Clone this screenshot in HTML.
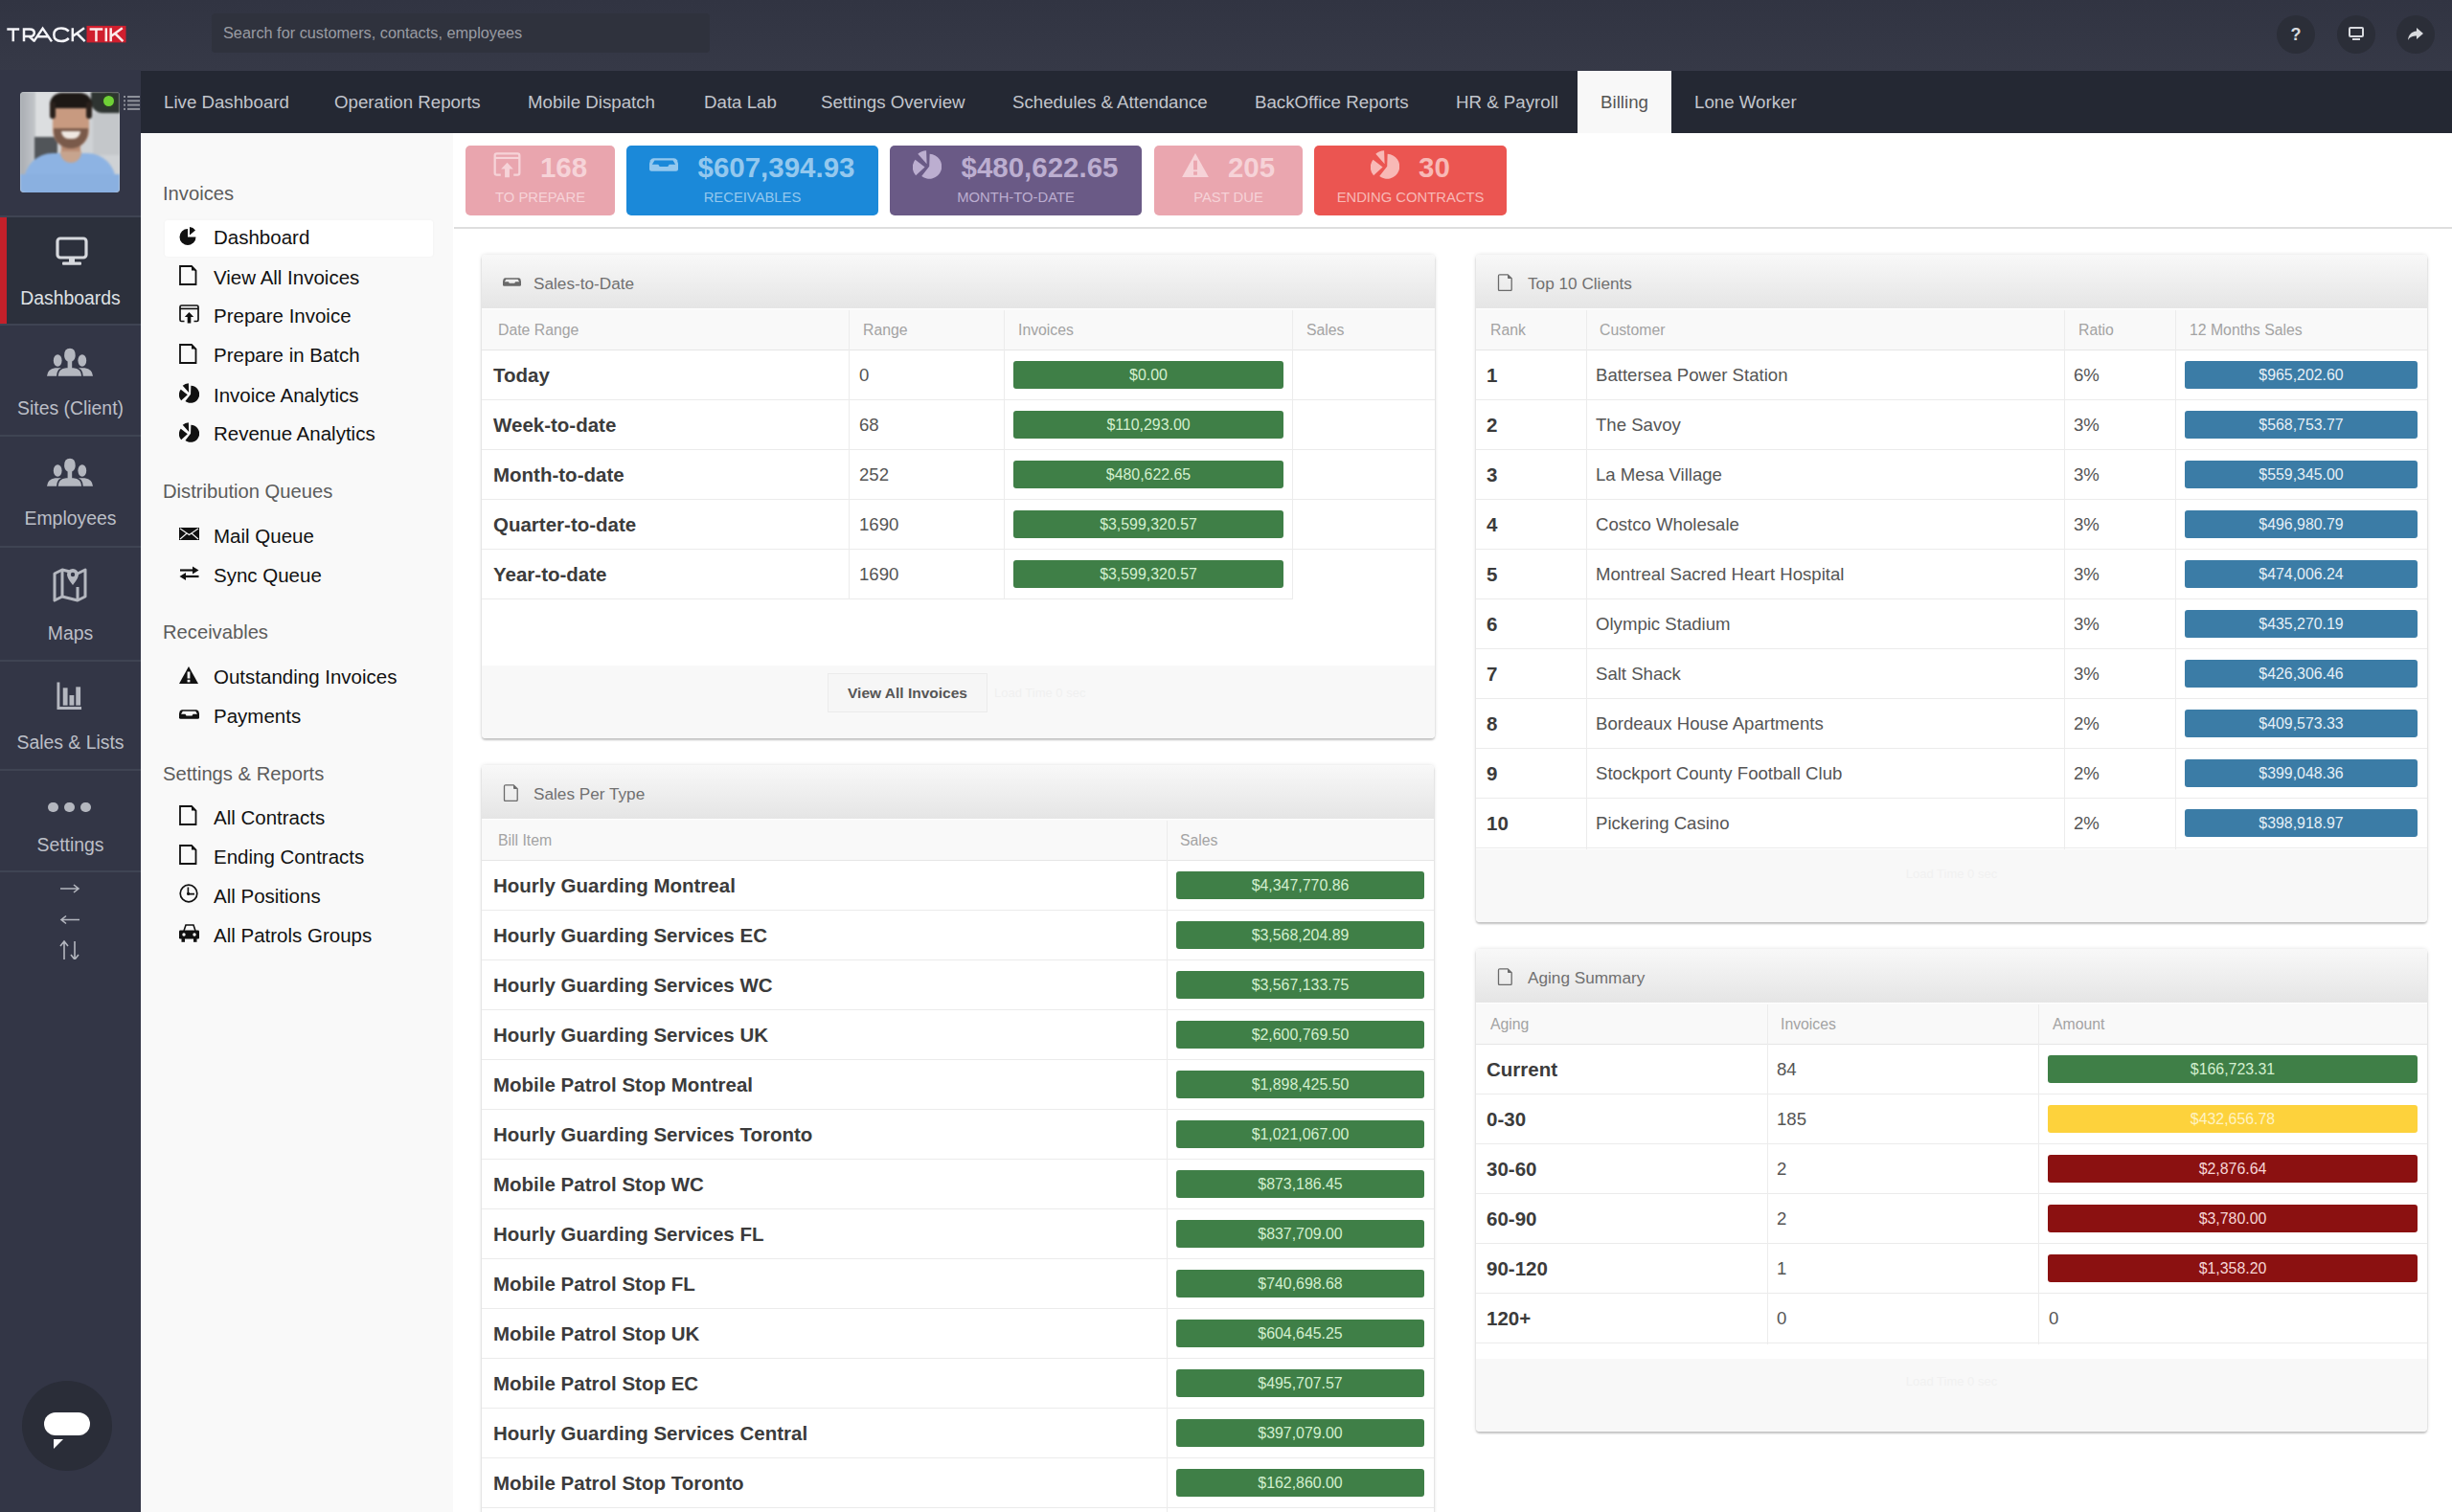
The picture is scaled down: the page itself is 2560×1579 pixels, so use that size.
<!DOCTYPE html><html><head><meta charset="utf-8"><style>
*{box-sizing:border-box;margin:0;padding:0}
html,body{width:2560px;height:1579px;overflow:hidden;background:#fff;font-family:"Liberation Sans",sans-serif}
.a{position:absolute}
.nw{white-space:nowrap}
#top{position:absolute;left:0;top:0;width:2560px;height:74px;background:linear-gradient(#313442,#363947)}
#search{position:absolute;left:221px;top:14px;width:520px;height:41px;background:#2f323d;border-radius:4px;color:#9a9ca3;font-size:16.3px;line-height:41px;padding-left:12px}
.tic{position:absolute;top:16px;width:40px;height:40px;border-radius:50%;background:#2b2e38;color:#d8dade}
#side{position:absolute;left:0;top:73px;width:147px;height:1506px;background:#333646;overflow:hidden}
.sep{position:absolute;left:0;width:147px;height:2px;background:#3f4453}
.st{position:absolute;left:0;width:147px;text-align:center;font-size:19.4px;color:#bcbfc7;line-height:24px;white-space:nowrap}
.sico{position:absolute;color:#b4b7bf}
#nav{position:absolute;left:147px;top:74px;width:2413px;height:65px;background:#242833}
.tab{position:absolute;top:0;height:65px;line-height:66px;font-size:18.7px;color:#c2c5cc;white-space:nowrap}
#sub{position:absolute;left:147px;top:139px;width:326px;height:1440px;background:#f9f9f9}
.sh{position:absolute;left:23px;font-size:20.2px;color:#5c5c5c;white-space:nowrap;line-height:24px}
.si{position:absolute;left:76px;font-size:20.5px;color:#111;white-space:nowrap;line-height:24px}
.sic{color:#111}
#main{position:absolute;left:473px;top:139px;width:2087px;height:1440px;background:#fff}
.kpi{position:absolute;top:13px;height:73px;border-radius:5px;white-space:nowrap}
.kpi .v{position:absolute;top:3px;left:0;right:0;height:40px;display:flex;justify-content:center;align-items:center;font-weight:bold;font-size:29.5px}
.kpi .v svg{position:static!important;margin-right:20px;margin-top:-6px}
.kpi .l{position:absolute;top:45px;left:0;right:0;font-size:14.8px;line-height:18px;text-align:center}
.panel{position:absolute;background:#fff;border-radius:4px;box-shadow:0 0 4px rgba(0,0,0,.13),0 2px 2px rgba(0,0,0,.2);overflow:hidden}
.ph{position:absolute;left:0;top:0;right:0;height:56px;background:linear-gradient(#f8f8f8,#e5e5e5);color:#707070;font-size:17.2px;line-height:56px;white-space:nowrap}
.ph span{position:absolute;left:54px;top:2px}
.ph svg{color:#6a6a6a}
.th{position:absolute;left:0;right:0;top:57px;height:43px;background:#f9f9f9;border-bottom:1px solid #e6e6e6;color:#a3a3a3;font-size:15.8px;line-height:43px;white-space:nowrap}
.th div,.row div.t{position:absolute;top:0}
.row{position:absolute;left:0;right:0;height:52px;border-bottom:1px solid #ebebeb;line-height:52px;white-space:nowrap}
.vd{position:absolute;width:1px;background:#ececec}
.b{font-weight:bold;font-size:20.5px;color:#3b3b3b}
.n{font-size:18.6px;color:#555}
.bar{position:absolute;top:11px;height:29px;border-radius:3px;text-align:center;color:#d3efcf;font-size:15.9px;line-height:30px}
.g{background:#3f7f47}
.bl{background:#3b7ca6;color:#e6f0f7}
.y{background:#fdd23c;color:#fff3c4}
.r{background:#8b1111;color:#f6d6d6}
.foot{position:absolute;left:0;right:0;background:#f8f8f8}
</style></head><body>
<div id="top">
<svg width="140" height="73" viewBox="0 0 140 73" style="position:absolute;left:0;top:0"><g fill="none" stroke="#f4f4f8" stroke-width="2.5"><path d="M7.3 30.4 H20.2 M13.75 30.4 V43.2"/><path d="M25 43.2 V30.4 H31 Q35.8 30.4 35.8 34.2 Q35.8 38 31 38 H25 M30.6 38 L36 43.2"/><path d="M35.2 43.4 L44.6 29.6 L54 43.4 M39.2 38.2 H50"/><path d="M71.8 32.6 Q68.8 29.5 64 29.5 Q56.3 29.5 56.3 36.3 Q56.3 43 64 43 Q68.8 43 71.8 40"/><path d="M75.8 29.3 V43.2 M88 29.3 L76.5 37.5 M80.4 35 L88.6 43.2"/></g><rect x="90.5" y="26.9" width="41" height="17.5" fill="#d01f2e"/><g fill="none" stroke="#fbeaea" stroke-width="2.5"><path d="M93.6 30.4 H107.3 M100.45 30.4 V43.2"/><path d="M110.8 29.3 V43.2"/><path d="M115.7 29.3 V43.2 M127.8 29.3 L116.4 37.5 M120.2 35 L128.4 43.2"/></g></svg>
<div id="search">Search for customers, contacts, employees</div>
<div class="tic" style="left:2377px"><div class="a" style="left:0;top:0;width:40px;line-height:40px;text-align:center;font-weight:bold;font-size:18px">?</div></div>
<div class="tic" style="left:2440px"><svg width="16" height="15" viewBox="0 0 16 15" style="position:absolute;left:12px;top:12px"><rect x="1" y="1" width="14" height="9" rx="1" fill="none" stroke="currentColor" stroke-width="2"/><rect x="4" y="12" width="8" height="2" fill="currentColor"/></svg></div>
<div class="tic" style="left:2502px"><svg width="16" height="14" viewBox="0 0 16 14" style="position:absolute;left:12px;top:13px"><path d="M9 0 L16 6 L9 12 V8.5 C5 8.5 2 9.5 0 13 C0.5 7.5 3.5 4 9 3.5 Z" fill="currentColor"/></svg></div>
</div>
<div id="side">
<div class="a" style="left:21px;top:23px;width:104px;height:105px;border-radius:4px;overflow:hidden;background:#cfd2d5"><div class="a" style="left:0;top:0;width:104px;height:105px;filter:blur(1.3px)"><div class="a" style="left:0;top:0;width:16px;height:105px;background:linear-gradient(90deg,#a9adb2,#c3c6ca)"></div><div class="a" style="left:16px;top:0;width:24px;height:105px;background:#dcdee0"></div><div class="a" style="left:15px;top:47px;width:24px;height:24px;background:#515559"></div><div class="a" style="left:74px;top:0;width:30px;height:22px;background:#2e3431;border-radius:0 0 0 12px"></div><div class="a" style="left:76px;top:22px;width:28px;height:44px;background:#c4c7ca"></div><div class="a" style="left:4px;top:64px;width:96px;height:50px;border-radius:30px 30px 0 0;background:#8db3e3"></div><div class="a" style="left:0;top:86px;width:104px;height:19px;background:#8ab0e0"></div><div class="a" style="left:43px;top:50px;width:20px;height:18px;background:#b98c74"></div><div class="a" style="left:42px;top:62px;width:22px;height:12px;border-radius:0 0 11px 11px;background:#c7a48e"></div><div class="a" style="left:34px;top:9px;width:38px;height:50px;border-radius:17px 17px 19px 19px;background:#c89a80"></div><div class="a" style="left:35px;top:38px;width:36px;height:21px;border-radius:0 0 18px 18px;background:#7a5a4a"></div><div class="a" style="left:43px;top:41px;width:20px;height:8px;border-radius:0 0 10px 10px;background:#efe8e2"></div><div class="a" style="left:31px;top:1px;width:44px;height:16px;border-radius:20px 20px 6px 6px;background:#1d1815"></div><div class="a" style="left:31px;top:10px;width:6px;height:18px;border-radius:3px;background:#2a211c"></div><div class="a" style="left:69px;top:10px;width:6px;height:18px;border-radius:3px;background:#2a211c"></div></div></div>
<div class="a" style="left:108px;top:27px;width:11px;height:11px;border-radius:50%;background:#6fd136;box-shadow:0 0 0 3px #2c3a2a"></div>
<div class="sico" style="left:129px;top:27px;color:#8e919a"><svg width="17" height="15" viewBox="0 0 17 15" style="position:absolute;"><g fill="currentColor"><rect x="0" y="0" width="2" height="2"/><rect x="4" y="0" width="13" height="2"/><rect x="0" y="4.3" width="2" height="2"/><rect x="4" y="4.3" width="13" height="2"/><rect x="0" y="8.6" width="2" height="2"/><rect x="4" y="8.6" width="13" height="2"/><rect x="0" y="12.9" width="2" height="2"/><rect x="4" y="12.9" width="13" height="2"/></g></svg></div>
<div class="a" style="left:0;top:153px;width:147px;height:113px;background:#2c303c"></div>
<div class="a" style="left:0;top:153px;width:7px;height:113px;background:#c4202a"></div>
<div class="sep" style="top:152px"></div>
<div class="sep" style="top:265px"></div>
<div class="sep" style="top:381px"></div>
<div class="sep" style="top:497px"></div>
<div class="sep" style="top:616px"></div>
<div class="sep" style="top:730px"></div>
<div class="sep" style="top:836px"></div>
<div class="sico" style="left:58px;top:174px;color:#d6d8dd"><svg width="34" height="30" viewBox="0 0 34 30" style="position:absolute;"><rect x="2" y="2" width="30" height="20" rx="3" fill="none" stroke="currentColor" stroke-width="3.2"/><rect x="14" y="23" width="6" height="4" fill="currentColor"/><rect x="7" y="26.5" width="20" height="3.2" rx="1" fill="currentColor"/></svg></div>
<div class="st" style="top:226px;color:#dfe1e5">Dashboards</div>
<div class="sico" style="left:49px;top:290px"><svg width="48" height="30" viewBox="0 0 48 30" style="position:absolute;"><ellipse cx="11.2" cy="13.5" rx="4.4" ry="6.2" fill="currentColor"/><path d="M0 29.8 Q0.5 22.5 8.5 21.3 H14 Q21 22.5 21 29.8 Z" fill="currentColor"/><ellipse cx="36.8" cy="13.5" rx="4.4" ry="6.2" fill="currentColor"/><path d="M48 29.8 Q47.5 22.5 39.5 21.3 H34 Q27 22.5 27 29.8 Z" fill="currentColor"/><path d="M10.8 30.5 Q10.8 21.2 20 20.5 H20.8 V15 Q17.3 12.5 17.3 8.2 Q17.3 0 24 0 Q30.5 0 30.5 8.2 Q30.5 12.5 27 15 V20.5 H27.6 Q37 21.2 37 30.5 Z" fill="currentColor" stroke="#333646" stroke-width="1.6"/></svg></div>
<div class="st" style="top:341px">Sites (Client)</div>
<div class="sico" style="left:49px;top:405px"><svg width="48" height="30" viewBox="0 0 48 30" style="position:absolute;"><ellipse cx="11.2" cy="13.5" rx="4.4" ry="6.2" fill="currentColor"/><path d="M0 29.8 Q0.5 22.5 8.5 21.3 H14 Q21 22.5 21 29.8 Z" fill="currentColor"/><ellipse cx="36.8" cy="13.5" rx="4.4" ry="6.2" fill="currentColor"/><path d="M48 29.8 Q47.5 22.5 39.5 21.3 H34 Q27 22.5 27 29.8 Z" fill="currentColor"/><path d="M10.8 30.5 Q10.8 21.2 20 20.5 H20.8 V15 Q17.3 12.5 17.3 8.2 Q17.3 0 24 0 Q30.5 0 30.5 8.2 Q30.5 12.5 27 15 V20.5 H27.6 Q37 21.2 37 30.5 Z" fill="currentColor" stroke="#333646" stroke-width="1.6"/></svg></div>
<div class="st" style="top:456px">Employees</div>
<div class="sico" style="left:55px;top:520px"><svg width="36" height="36" viewBox="0 0 36 36" style="position:absolute;"><path d="M2 6 L10 2 L26 6 L34 2 V30 L26 34 L10 30 L2 34 Z" fill="none" stroke="currentColor" stroke-width="3" stroke-linejoin="round"/><path d="M10 2 V30 M26 20 V34" stroke="currentColor" stroke-width="3"/><path d="M21 1 A6 6 0 0 1 27 7 C27 11 21 18 21 18 C21 18 15 11 15 7 A6 6 0 0 1 21 1 Z" fill="currentColor"/><circle cx="21" cy="7" r="2.2" fill="#333646"/></svg></div>
<div class="st" style="top:576px">Maps</div>
<div class="sico" style="left:59px;top:639px"><svg width="27" height="30" viewBox="0 0 28 30" style="position:absolute;"><path d="M2 0 V28 H27" fill="none" stroke="currentColor" stroke-width="3"/><rect x="7" y="6" width="5" height="19" fill="currentColor"/><rect x="14" y="14" width="5" height="11" fill="currentColor"/><rect x="21" y="5" width="5" height="20" fill="currentColor"/></svg></div>
<div class="st" style="top:690px">Sales &amp; Lists</div>
<div class="a" style="left:50.0px;top:764.5px;width:10.6px;height:10.6px;border-radius:50%;background:#b4b7bf"></div>
<div class="a" style="left:67.2px;top:764.5px;width:10.6px;height:10.6px;border-radius:50%;background:#b4b7bf"></div>
<div class="a" style="left:84.4px;top:764.5px;width:10.6px;height:10.6px;border-radius:50%;background:#b4b7bf"></div>
<div class="st" style="top:797px">Settings</div>
<div class="sico" style="left:62px;top:849px"><svg width="22" height="80" viewBox="0 0 22 80" style="position:absolute;"><path d="M1 6 H20 M15 2 L20 6 L15 10" fill="none" stroke="currentColor" stroke-width="1.6"/><path d="M21 38.5 H2 M7 34.5 L2 38.5 L7 42.5" fill="none" stroke="currentColor" stroke-width="1.6"/><path d="M5 81 V62 M1 66 L5 61 L9 66 M16 61 V80 M12 75 L16 80 L20 75" fill="none" stroke="currentColor" stroke-width="1.6"/></svg></div>
<div class="a" style="left:23px;top:1369px;width:94px;height:94px;border-radius:50%;background:#2a2d38"><div class="a" style="left:23px;top:33px;width:48px;height:24px;border-radius:12px;background:#fff"></div><svg width="10" height="10" viewBox="0 0 10 10" style="position:absolute;left:33px;top:61px"><path d="M0 0 H10 L0 10 Z" fill="#fff"/></svg></div>
</div>
<div id="nav">
<div class="tab" style="left:24px">Live Dashboard</div>
<div class="tab" style="left:202px">Operation Reports</div>
<div class="tab" style="left:404px">Mobile Dispatch</div>
<div class="tab" style="left:588px">Data Lab</div>
<div class="tab" style="left:710px">Settings Overview</div>
<div class="tab" style="left:910px">Schedules &amp; Attendance</div>
<div class="tab" style="left:1163px">BackOffice Reports</div>
<div class="tab" style="left:1373px">HR &amp; Payroll</div>
<div class="tab" style="left:1500px;width:98px;background:#f8f8f8;color:#555;text-align:center;top:0;height:65px;line-height:66px">Billing</div>
<div class="tab" style="left:1622px">Lone Worker</div>
</div>
<div id="sub">
<div class="a" style="left:25px;top:91px;width:280px;height:38px;background:#fff;border-radius:3px;box-shadow:0 0 3px rgba(0,0,0,.04)"></div>
<div class="sh" style="top:50.9px">Invoices</div>
<div class="sh" style="top:361.9px">Distribution Queues</div>
<div class="sh" style="top:509.2px">Receivables</div>
<div class="sh" style="top:656.5px">Settings &amp; Reports</div>
<div class="si" style="top:97.2px">Dashboard</div>
<div class="sic"><svg width="19" height="21" viewBox="0 0 19 21" style="position:absolute;left:40px;top:96.5px"><path d="M9 3 A8.5 8.5 0 1 0 17.5 11.5 L9 11.5 Z" fill="currentColor"/><path d="M11 1 L11 9.5 L17 4.5 A8.5 8.5 0 0 0 11 1 Z" fill="currentColor"/></svg></div>
<div class="si" style="top:138.6px">View All Invoices</div>
<div class="sic"><svg width="19" height="21" viewBox="0 0 19 21" style="position:absolute;left:40px;top:137.9px"><path d="M1 1 H13 L17.5 5.5 V20 H1 Z" fill="none" stroke="currentColor" stroke-width="1.8"/><path d="M13 1 L17.5 5.5 H13 Z" fill="currentColor"/></svg></div>
<div class="si" style="top:179.2px">Prepare Invoice</div>
<div class="sic"><svg width="21" height="20" viewBox="0 0 21 20" style="position:absolute;left:40px;top:179.0px"><path d="M5.5 17.5 H2.5 Q1 17.5 1 16 V2.5 Q1 1 2.5 1 H18.5 Q20 1 20 2.5 V16 Q20 17.5 18.5 17.5 H15.5" fill="none" stroke="currentColor" stroke-width="1.7"/><rect x="1" y="3.6" width="19" height="1.6" fill="currentColor"/><path d="M10.5 8 L5.8 13 H8.7 V19.5 H12.3 V13 H15.2 Z" fill="currentColor"/></svg></div>
<div class="si" style="top:220.2px">Prepare in Batch</div>
<div class="sic"><svg width="19" height="21" viewBox="0 0 19 21" style="position:absolute;left:40px;top:219.5px"><path d="M1 1 H13 L17.5 5.5 V20 H1 Z" fill="none" stroke="currentColor" stroke-width="1.8"/><path d="M13 1 L17.5 5.5 H13 Z" fill="currentColor"/></svg></div>
<div class="si" style="top:261.6px">Invoice Analytics</div>
<div class="sic"><svg width="21" height="21" viewBox="0 0 30 30" style="position:absolute;left:40px;top:260.9px"><path d="M17.20 16.80 L17.65 3.81 A13.0 13.0 0 1 1 9.20 27.04 Z M12.60 17.60 L3.09 26.16 A12.8 12.8 0 0 1 2.51 9.72 Z M14.60 14.20 L5.30 3.87 A13.9 13.9 0 0 1 14.11 0.31 Z" fill="currentColor"/></svg></div>
<div class="si" style="top:302.2px">Revenue Analytics</div>
<div class="sic"><svg width="21" height="21" viewBox="0 0 30 30" style="position:absolute;left:40px;top:301.5px"><path d="M17.20 16.80 L17.65 3.81 A13.0 13.0 0 1 1 9.20 27.04 Z M12.60 17.60 L3.09 26.16 A12.8 12.8 0 0 1 2.51 9.72 Z M14.60 14.20 L5.30 3.87 A13.9 13.9 0 0 1 14.11 0.31 Z" fill="currentColor"/></svg></div>
<div class="si" style="top:408.5px">Mail Queue</div>
<div class="sic"><svg width="21" height="13" viewBox="0 0 21 13" style="position:absolute;left:40px;top:411.8px"><rect x="0" y="0" width="21" height="13" fill="currentColor"/><path d="M1 1 L10.5 7.5 L20 1 M1 12 L8 6 M20 12 L13 6" fill="none" stroke="#f8f8f8" stroke-width="1.1"/></svg></div>
<div class="si" style="top:449.6px">Sync Queue</div>
<div class="sic"><svg width="21" height="15" viewBox="0 0 21 15" style="position:absolute;left:40px;top:451.9px"><path d="M1 4.5 H16" stroke="currentColor" stroke-width="2.2"/><path d="M14 0.5 L20.5 4.5 L14 8.5 Z" fill="currentColor"/><path d="M5 11 H20.5" stroke="currentColor" stroke-width="2.2"/><path d="M7 7 L0.5 11 L7 15 Z" fill="currentColor"/></svg></div>
<div class="si" style="top:555.7px">Outstanding Invoices</div>
<div class="sic"><svg width="20" height="18" viewBox="0 0 20 18" style="position:absolute;left:40px;top:556.5px"><path d="M10 0 L20 18 H0 Z" fill="currentColor"/><rect x="8.6" y="5.5" width="2.8" height="7" fill="#f8f8f8"/><rect x="8.6" y="13.8" width="2.8" height="2.6" fill="#f8f8f8"/></svg></div>
<div class="si" style="top:596.8px">Payments</div>
<div class="sic"><svg width="21" height="10" viewBox="0 0 21 9.5" style="position:absolute;left:40px;top:601.6px"><path d="M3 0 H18 Q19.5 0 20.3 1.5 L21 4 V8 Q21 9.5 19.5 9.5 H1.5 Q0 9.5 0 8 V4 L0.7 1.5 Q1.5 0 3 0 Z" fill="currentColor"/><path d="M3.8 1.6 H17.2 L19 4.6 H14.5 L13.5 6.2 H7.5 L6.5 4.6 H2 Z" fill="#f8f8f8"/></svg></div>
<div class="si" style="top:703.0px">All Contracts</div>
<div class="sic"><svg width="19" height="21" viewBox="0 0 19 21" style="position:absolute;left:40px;top:702.3px"><path d="M1 1 H13 L17.5 5.5 V20 H1 Z" fill="none" stroke="currentColor" stroke-width="1.8"/><path d="M13 1 L17.5 5.5 H13 Z" fill="currentColor"/></svg></div>
<div class="si" style="top:743.7px">Ending Contracts</div>
<div class="sic"><svg width="19" height="21" viewBox="0 0 19 21" style="position:absolute;left:40px;top:743.0px"><path d="M1 1 H13 L17.5 5.5 V20 H1 Z" fill="none" stroke="currentColor" stroke-width="1.8"/><path d="M13 1 L17.5 5.5 H13 Z" fill="currentColor"/></svg></div>
<div class="si" style="top:784.5px">All Positions</div>
<div class="sic"><svg width="20" height="20" viewBox="0 0 20 20" style="position:absolute;left:40px;top:784.3px"><circle cx="10" cy="10" r="8.8" fill="none" stroke="currentColor" stroke-width="1.7"/><path d="M9.4 3.5 V10.6 H16" fill="none" stroke="currentColor" stroke-width="1.6"/><circle cx="9.6" cy="10.3" r="1.6" fill="currentColor"/></svg></div>
<div class="si" style="top:825.6px">All Patrols Groups</div>
<div class="sic"><svg width="21" height="19" viewBox="0 0 21 19" style="position:absolute;left:40px;top:825.9px"><path d="M5 7 L7 1 H15 L17 7" fill="none" stroke="currentColor" stroke-width="1.6"/><rect x="0" y="6.5" width="21" height="9" rx="1.2" fill="currentColor"/><rect x="2.5" y="14" width="3.5" height="4.8" fill="currentColor"/><rect x="15" y="14" width="3.5" height="4.8" fill="currentColor"/><circle cx="5" cy="11" r="1.7" fill="#f8f8f8"/><circle cx="16" cy="11" r="1.7" fill="#f8f8f8"/></svg></div>
</div>
<div id="main">
<div class="a" style="left:1px;top:0;width:2086px;height:100px;background:#fff;border-bottom:2px solid #dedede"></div>
<div class="kpi" style="left:13px;width:156px;background:#e9a5ae;color:#f6d3d8"><div class="v"><svg width="29" height="27" viewBox="0 0 21 20" style="position:absolute;"><path d="M5.5 17.5 H2.5 Q1 17.5 1 16 V2.5 Q1 1 2.5 1 H18.5 Q20 1 20 2.5 V16 Q20 17.5 18.5 17.5 H15.5" fill="none" stroke="currentColor" stroke-width="1.7"/><rect x="1" y="3.6" width="19" height="1.6" fill="currentColor"/><path d="M10.5 8 L5.8 13 H8.7 V19.5 H12.3 V13 H15.2 Z" fill="currentColor"/></svg><span>168</span></div><div class="l">TO PREPARE</div></div>
<div class="kpi" style="left:181px;width:263px;background:#1b89d9;color:#94c8ee"><div class="v"><svg width="30" height="14" viewBox="0 0 21 9.5" style="position:absolute;"><path d="M3 0 H18 Q19.5 0 20.3 1.5 L21 4 V8 Q21 9.5 19.5 9.5 H1.5 Q0 9.5 0 8 V4 L0.7 1.5 Q1.5 0 3 0 Z" fill="currentColor"/><path d="M3.8 1.6 H17.2 L19 4.6 H14.5 L13.5 6.2 H7.5 L6.5 4.6 H2 Z" fill="#1b89d9"/></svg><span>$607,394.93</span></div><div class="l">RECEIVABLES</div></div>
<div class="kpi" style="left:456px;width:263px;background:#6a5a86;color:#bcaed0"><div class="v"><svg width="30" height="30" viewBox="0 0 30 30" style="position:absolute;"><path d="M17.20 16.80 L17.65 3.81 A13.0 13.0 0 1 1 9.20 27.04 Z M12.60 17.60 L3.09 26.16 A12.8 12.8 0 0 1 2.51 9.72 Z M14.60 14.20 L5.30 3.87 A13.9 13.9 0 0 1 14.11 0.31 Z" fill="currentColor"/></svg><span>$480,622.65</span></div><div class="l">MONTH-TO-DATE</div></div>
<div class="kpi" style="left:732px;width:155px;background:#eaa6af;color:#f6d3d8"><div class="v"><svg width="28" height="25" viewBox="0 0 20 18" style="position:absolute;"><path d="M10 0 L20 18 H0 Z" fill="currentColor"/><rect x="8.6" y="5.5" width="2.8" height="7" fill="#eaa6af"/><rect x="8.6" y="13.8" width="2.8" height="2.6" fill="#eaa6af"/></svg><span>205</span></div><div class="l">PAST DUE</div></div>
<div class="kpi" style="left:899px;width:201px;background:#eb5551;color:#f8b9b6"><div class="v"><svg width="30" height="30" viewBox="0 0 30 30" style="position:absolute;"><path d="M17.20 16.80 L17.65 3.81 A13.0 13.0 0 1 1 9.20 27.04 Z M12.60 17.60 L3.09 26.16 A12.8 12.8 0 0 1 2.51 9.72 Z M14.60 14.20 L5.30 3.87 A13.9 13.9 0 0 1 14.11 0.31 Z" fill="currentColor"/></svg><span>30</span></div><div class="l">ENDING CONTRACTS</div></div>
<div class="panel" style="left:30px;top:127px;width:995px;height:505px">
<div class="ph"><svg width="19" height="9" viewBox="0 0 21 9.5" style="position:absolute;left:22px;top:24.0px"><path d="M3 0 H18 Q19.5 0 20.3 1.5 L21 4 V8 Q21 9.5 19.5 9.5 H1.5 Q0 9.5 0 8 V4 L0.7 1.5 Q1.5 0 3 0 Z" fill="currentColor"/><path d="M3.8 1.6 H17.2 L19 4.6 H14.5 L13.5 6.2 H7.5 L6.5 4.6 H2 Z" fill="#eee"/></svg><span>Sales-to-Date</span></div>
<div class="th">
<div style="left:17px">Date Range</div>
<div style="left:398px">Range</div>
<div style="left:560px">Invoices</div>
<div style="left:861px">Sales</div>
</div>
<div class="row" style="top:100px"><div class="t b" style="left:12px">Today</div><div class="t n" style="left:394px">0</div><div class="bar g" style="left:555px;width:282px">$0.00</div></div>
<div class="row" style="top:152px"><div class="t b" style="left:12px">Week-to-date</div><div class="t n" style="left:394px">68</div><div class="bar g" style="left:555px;width:282px">$110,293.00</div></div>
<div class="row" style="top:204px"><div class="t b" style="left:12px">Month-to-date</div><div class="t n" style="left:394px">252</div><div class="bar g" style="left:555px;width:282px">$480,622.65</div></div>
<div class="row" style="top:256px"><div class="t b" style="left:12px">Quarter-to-date</div><div class="t n" style="left:394px">1690</div><div class="bar g" style="left:555px;width:282px">$3,599,320.57</div></div>
<div class="row" style="top:308px"><div class="t b" style="left:12px">Year-to-date</div><div class="t n" style="left:394px">1690</div><div class="bar g" style="left:555px;width:282px">$3,599,320.57</div></div>
<div class="vd" style="left:383px;top:58px;height:43px"></div><div class="vd" style="left:545px;top:58px;height:43px"></div><div class="vd" style="left:846px;top:58px;height:43px"></div><div class="vd" style="left:383px;top:100px;height:260px"></div><div class="vd" style="left:545px;top:100px;height:260px"></div><div class="vd" style="left:846px;top:100px;height:260px"></div><div class="a" style="left:847px;top:359px;width:148px;height:2px;background:#fff"></div><div class="foot" style="top:429px;height:76px"><div class="a" style="left:361px;top:8px;width:167px;height:41px;border:1px solid #ebebeb;background:#f6f6f6;text-align:center;line-height:40px;font-weight:bold;font-size:15.5px;color:#555">View All Invoices</div><div class="a nw" style="left:535px;top:8px;line-height:41px;font-size:13px;color:#f0f0f0">Load Time 0 sec</div></div>
</div>
<div class="panel" style="left:30px;top:660px;width:994px;height:800px">
<div class="ph"><svg width="16" height="18" viewBox="0 0 16 18" style="position:absolute;left:22px;top:19.5px"><path d="M1.5 2.2 Q1.5 0.8 2.9 0.8 H11.2 L15.2 4.8 V16.2 Q15.2 17.5 13.8 17.5 H2.9 Q1.5 17.5 1.5 16.2 Z" fill="none" stroke="currentColor" stroke-width="1.3"/><path d="M11 0.8 L15.2 5 H11.8 Q11 5 11 4.2 Z" fill="currentColor"/></svg><span>Sales Per Type</span></div>
<div class="th">
<div style="left:17px">Bill Item</div>
<div style="left:729px">Sales</div>
</div>
<div class="row" style="top:100px"><div class="t b" style="left:12px">Hourly Guarding Montreal</div><div class="bar g" style="left:725px;width:259px">$4,347,770.86</div></div>
<div class="row" style="top:152px"><div class="t b" style="left:12px">Hourly Guarding Services EC</div><div class="bar g" style="left:725px;width:259px">$3,568,204.89</div></div>
<div class="row" style="top:204px"><div class="t b" style="left:12px">Hourly Guarding Services WC</div><div class="bar g" style="left:725px;width:259px">$3,567,133.75</div></div>
<div class="row" style="top:256px"><div class="t b" style="left:12px">Hourly Guarding Services UK</div><div class="bar g" style="left:725px;width:259px">$2,600,769.50</div></div>
<div class="row" style="top:308px"><div class="t b" style="left:12px">Mobile Patrol Stop Montreal</div><div class="bar g" style="left:725px;width:259px">$1,898,425.50</div></div>
<div class="row" style="top:360px"><div class="t b" style="left:12px">Hourly Guarding Services Toronto</div><div class="bar g" style="left:725px;width:259px">$1,021,067.00</div></div>
<div class="row" style="top:412px"><div class="t b" style="left:12px">Mobile Patrol Stop WC</div><div class="bar g" style="left:725px;width:259px">$873,186.45</div></div>
<div class="row" style="top:464px"><div class="t b" style="left:12px">Hourly Guarding Services FL</div><div class="bar g" style="left:725px;width:259px">$837,709.00</div></div>
<div class="row" style="top:516px"><div class="t b" style="left:12px">Mobile Patrol Stop FL</div><div class="bar g" style="left:725px;width:259px">$740,698.68</div></div>
<div class="row" style="top:568px"><div class="t b" style="left:12px">Mobile Patrol Stop UK</div><div class="bar g" style="left:725px;width:259px">$604,645.25</div></div>
<div class="row" style="top:620px"><div class="t b" style="left:12px">Mobile Patrol Stop EC</div><div class="bar g" style="left:725px;width:259px">$495,707.57</div></div>
<div class="row" style="top:672px"><div class="t b" style="left:12px">Hourly Guarding Services Central</div><div class="bar g" style="left:725px;width:259px">$397,079.00</div></div>
<div class="row" style="top:724px"><div class="t b" style="left:12px">Mobile Patrol Stop Toronto</div><div class="bar g" style="left:725px;width:259px">$162,860.00</div></div>
<div class="vd" style="left:715px;top:58px;height:800px"></div>
</div>
<div class="panel" style="left:1068px;top:127px;width:993px;height:697px">
<div class="ph"><svg width="16" height="18" viewBox="0 0 16 18" style="position:absolute;left:22px;top:19.5px"><path d="M1.5 2.2 Q1.5 0.8 2.9 0.8 H11.2 L15.2 4.8 V16.2 Q15.2 17.5 13.8 17.5 H2.9 Q1.5 17.5 1.5 16.2 Z" fill="none" stroke="currentColor" stroke-width="1.3"/><path d="M11 0.8 L15.2 5 H11.8 Q11 5 11 4.2 Z" fill="currentColor"/></svg><span>Top 10 Clients</span></div>
<div class="th">
<div style="left:15px">Rank</div>
<div style="left:129px">Customer</div>
<div style="left:629px">Ratio</div>
<div style="left:745px">12 Months Sales</div>
</div>
<div class="row" style="top:100px"><div class="t b" style="left:11px">1</div><div class="t n" style="left:125px">Battersea Power Station</div><div class="t n" style="left:624px">6%</div><div class="bar bl" style="left:740px;width:243px">$965,202.60</div></div>
<div class="row" style="top:152px"><div class="t b" style="left:11px">2</div><div class="t n" style="left:125px">The Savoy</div><div class="t n" style="left:624px">3%</div><div class="bar bl" style="left:740px;width:243px">$568,753.77</div></div>
<div class="row" style="top:204px"><div class="t b" style="left:11px">3</div><div class="t n" style="left:125px">La Mesa Village</div><div class="t n" style="left:624px">3%</div><div class="bar bl" style="left:740px;width:243px">$559,345.00</div></div>
<div class="row" style="top:256px"><div class="t b" style="left:11px">4</div><div class="t n" style="left:125px">Costco Wholesale</div><div class="t n" style="left:624px">3%</div><div class="bar bl" style="left:740px;width:243px">$496,980.79</div></div>
<div class="row" style="top:308px"><div class="t b" style="left:11px">5</div><div class="t n" style="left:125px">Montreal Sacred Heart Hospital</div><div class="t n" style="left:624px">3%</div><div class="bar bl" style="left:740px;width:243px">$474,006.24</div></div>
<div class="row" style="top:360px"><div class="t b" style="left:11px">6</div><div class="t n" style="left:125px">Olympic Stadium</div><div class="t n" style="left:624px">3%</div><div class="bar bl" style="left:740px;width:243px">$435,270.19</div></div>
<div class="row" style="top:412px"><div class="t b" style="left:11px">7</div><div class="t n" style="left:125px">Salt Shack</div><div class="t n" style="left:624px">3%</div><div class="bar bl" style="left:740px;width:243px">$426,306.46</div></div>
<div class="row" style="top:464px"><div class="t b" style="left:11px">8</div><div class="t n" style="left:125px">Bordeaux House Apartments</div><div class="t n" style="left:624px">2%</div><div class="bar bl" style="left:740px;width:243px">$409,573.33</div></div>
<div class="row" style="top:516px"><div class="t b" style="left:11px">9</div><div class="t n" style="left:125px">Stockport County Football Club</div><div class="t n" style="left:624px">2%</div><div class="bar bl" style="left:740px;width:243px">$399,048.36</div></div>
<div class="row" style="top:568px"><div class="t b" style="left:11px">10</div><div class="t n" style="left:125px">Pickering Casino</div><div class="t n" style="left:624px">2%</div><div class="bar bl" style="left:740px;width:243px">$398,918.97</div></div>
<div class="vd" style="left:115px;top:58px;height:563px"></div><div class="vd" style="left:614px;top:58px;height:563px"></div><div class="vd" style="left:730px;top:58px;height:563px"></div><div class="foot" style="top:621px;height:76px"><div class="a nw" style="left:0;right:0;top:18px;text-align:center;font-size:13px;color:#f1f1f1">Load Time 0 sec</div></div>
</div>
<div class="panel" style="left:1068px;top:852px;width:993px;height:504px">
<div class="ph"><svg width="16" height="18" viewBox="0 0 16 18" style="position:absolute;left:22px;top:19.5px"><path d="M1.5 2.2 Q1.5 0.8 2.9 0.8 H11.2 L15.2 4.8 V16.2 Q15.2 17.5 13.8 17.5 H2.9 Q1.5 17.5 1.5 16.2 Z" fill="none" stroke="currentColor" stroke-width="1.3"/><path d="M11 0.8 L15.2 5 H11.8 Q11 5 11 4.2 Z" fill="currentColor"/></svg><span>Aging Summary</span></div>
<div class="th">
<div style="left:15px">Aging</div>
<div style="left:318px">Invoices</div>
<div style="left:602px">Amount</div>
</div>
<div class="row" style="top:100px"><div class="t b" style="left:11px">Current</div><div class="t n" style="left:314px">84</div><div class="bar g" style="left:597px;width:386px">$166,723.31</div></div>
<div class="row" style="top:152px"><div class="t b" style="left:11px">0-30</div><div class="t n" style="left:314px">185</div><div class="bar y" style="left:597px;width:386px">$432,656.78</div></div>
<div class="row" style="top:204px"><div class="t b" style="left:11px">30-60</div><div class="t n" style="left:314px">2</div><div class="bar r" style="left:597px;width:386px">$2,876.64</div></div>
<div class="row" style="top:256px"><div class="t b" style="left:11px">60-90</div><div class="t n" style="left:314px">2</div><div class="bar r" style="left:597px;width:386px">$3,780.00</div></div>
<div class="row" style="top:308px"><div class="t b" style="left:11px">90-120</div><div class="t n" style="left:314px">1</div><div class="bar r" style="left:597px;width:386px">$1,358.20</div></div>
<div class="row" style="top:360px"><div class="t b" style="left:11px">120+</div><div class="t n" style="left:314px">0</div><div class="t n" style="left:598px">0</div></div>
<div class="vd" style="left:304px;top:58px;height:355px"></div><div class="vd" style="left:587px;top:58px;height:355px"></div><div class="foot" style="top:428px;height:76px"><div class="a nw" style="left:0;right:0;top:16px;text-align:center;font-size:13px;color:#f1f1f1">Load Time 0 sec</div></div>
</div>
</div>
</body></html>
